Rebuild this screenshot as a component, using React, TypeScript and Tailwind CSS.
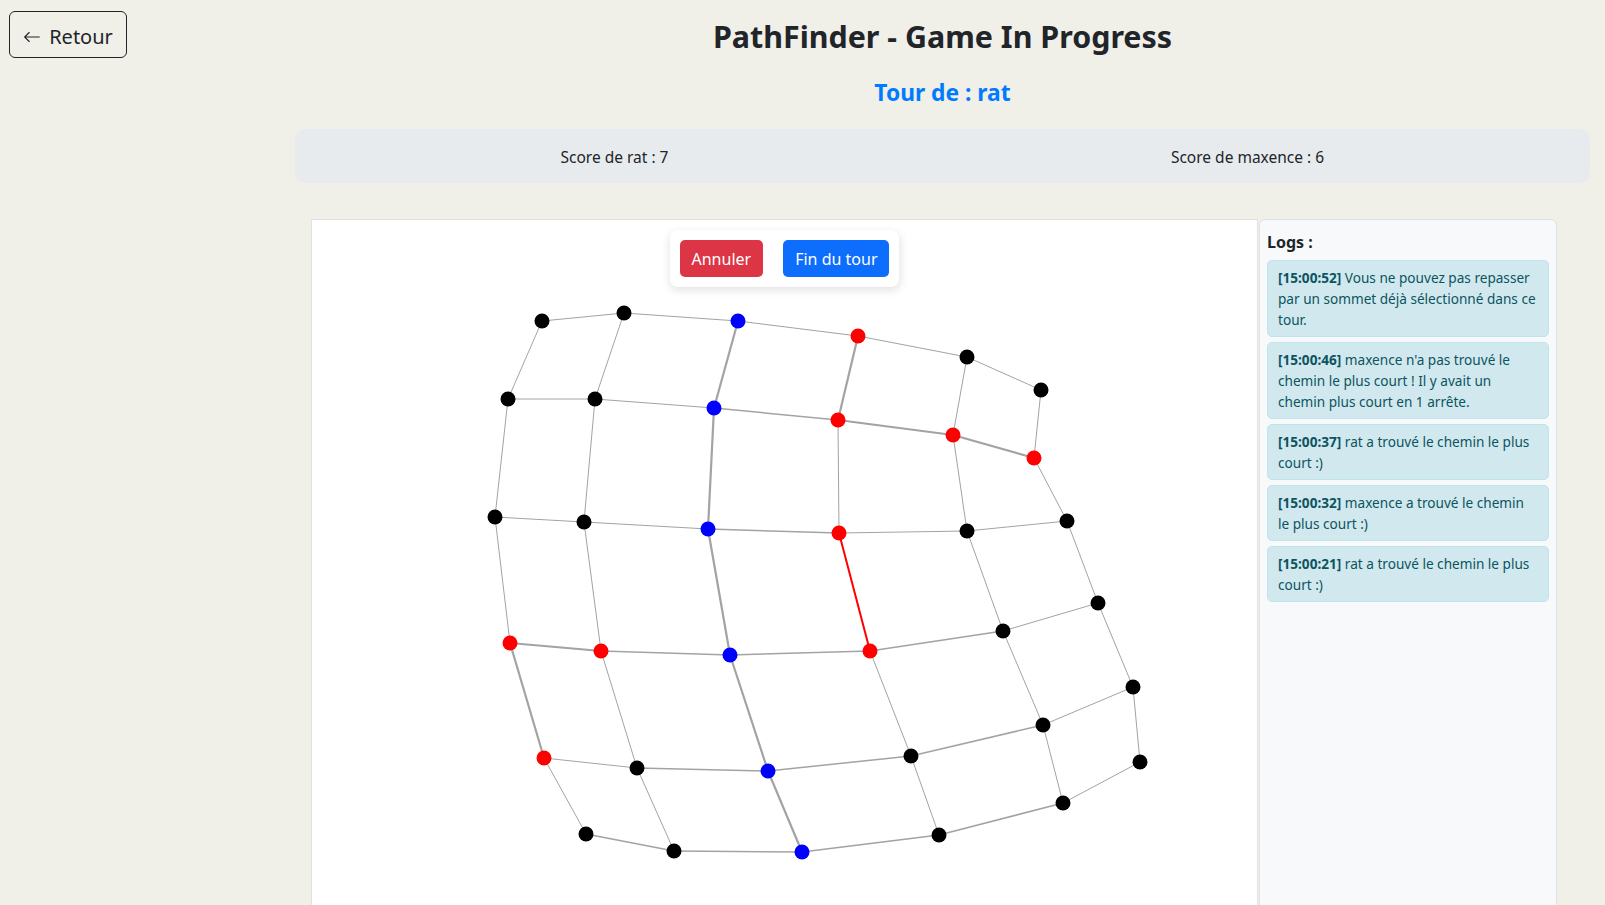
import { BsArrowLeft } from "react-icons/bs";

// graph coords are relative to the canvas box interior
const OX = 312;
const OY = 220;

const K = "#000000";
const B = "#0000ff";
const R = "#ff0000";

const grid: [number, number, string][][] = [
  [[542, 321, K], [624, 313, K], [738, 321, B], [858, 336, R], [967, 357, K], [1041, 390, K]],
  [[508, 399, K], [595, 399, K], [714, 408, B], [838, 420, R], [953, 435, R], [1034, 458, R]],
  [[495, 517, K], [584, 522, K], [708, 529, B], [839, 533, R], [967, 531, K], [1067, 521, K]],
  [[510, 643, R], [601, 651, R], [730, 655, B], [870, 651, R], [1003, 631, K], [1098, 603, K]],
  [[544, 758, R], [637, 768, K], [768, 771, B], [911, 756, K], [1043, 725, K], [1133, 687, K]],
  [[586, 834, K], [674, 851, K], [802, 852, B], [939, 835, K], [1063, 803, K], [1140, 762, K]],
];

const thick = ["v02", "v03", "v12", "h13", "h14", "v22", "h30", "v30", "v32", "v42"];
const medium = ["h12", "h22", "h31", "h33", "h41", "h42", "h43", "h50", "h51", "h52", "h53", "h32"];
const redEdges = ["v23"];

type Edge = { id: string; a: [number, number]; b: [number, number] };

function buildEdges(): Edge[] {
  const out: Edge[] = [];
  for (let r = 0; r < 6; r++) {
    for (let c = 0; c < 6; c++) {
      const p = grid[r][c];
      if (c < 5) {
        const q = grid[r][c + 1];
        out.push({ id: `h${r}${c}`, a: [p[0], p[1]], b: [q[0], q[1]] });
      }
      if (r < 5) {
        const q = grid[r + 1][c];
        out.push({ id: `v${r}${c}`, a: [p[0], p[1]], b: [q[0], q[1]] });
      }
    }
  }
  return out;
}

const logs = [
  { t: "15:00:52", msg: "Vous ne pouvez pas repasser par un sommet déjà sélectionné dans ce tour." },
  { t: "15:00:46", msg: "maxence n'a pas trouvé le chemin le plus court ! Il y avait un chemin plus court en 1 arrête." },
  { t: "15:00:37", msg: "rat a trouvé le chemin le plus court :)" },
  { t: "15:00:32", msg: "maxence a trouvé le chemin le plus court :)" },
  { t: "15:00:21", msg: "rat a trouvé le chemin le plus court :)" },
];

function Graph() {
  const edges = buildEdges();
  return (
    <svg width="945" height="700" viewBox="0 0 945 700" className="block">
      {edges.map((e) => {
        const red = redEdges.includes(e.id);
        const w = red ? 2 : thick.includes(e.id) ? 2.2 : medium.includes(e.id) ? 1.5 : 1;
        return (
          <line
            key={e.id}
            x1={e.a[0] - OX}
            y1={e.a[1] - OY}
            x2={e.b[0] - OX}
            y2={e.b[1] - OY}
            stroke={red ? "#ff0000" : "#a3a3a3"}
            strokeWidth={w}
          />
        );
      })}
      {grid.flat().map((n, i) => (
        <circle key={i} cx={n[0] - OX} cy={n[1] - OY} r={7.5} fill={n[2]} />
      ))}
    </svg>
  );
}

export default function App() {
  return (
    <div className="min-h-screen bg-[#f0efe8] font-['Noto_Sans',sans-serif] text-[#212529]">
      <div className="flex">
        <div className="w-[280px] shrink-0 pl-[9px] pt-[11px]">
          <button className="flex h-[47px] w-[118px] items-center justify-center gap-[8px] rounded-[6px] border border-[#212529] pt-[4px] text-[20px]">
            <BsArrowLeft className="h-[18px] w-[18px]" />
            <span>Retour</span>
          </button>
        </div>

        <div className="flex-1">
          <h1 className="pt-[17px] text-center text-[30.4px] font-bold leading-[40px]">PathFinder - Game In Progress</h1>
          <h2 className="mt-[21px] text-center text-[22.8px] font-bold leading-[30px] text-[#007bff]">Tour de : rat</h2>

          <div className="mx-[15px] mt-[21px] flex h-[54px] items-center rounded-[10px] bg-[#e8ebee] pl-[3px] pr-[26px] pt-[3px] text-[15.5px]">
            <div className="flex-1 text-center">Score de rat : 7</div>
            <div className="flex-1 text-center">Score de maxence : 6</div>
          </div>

          <div className="mt-[36px] flex gap-[1px] pl-[31px]">
            <div className="relative h-[702px] w-[947px] shrink-0 border border-[#dee2e6] bg-white">
              <Graph />
              <div className="absolute left-1/2 top-[10px] flex -translate-x-1/2 gap-[20px] rounded-lg bg-white p-[10px] shadow-[0_3px_10px_rgba(0,0,0,0.12)]">
                <button className="h-[37px] rounded-[5px] bg-[#dc3545] px-[12px] text-[16px] text-white">Annuler</button>
                <button className="h-[37px] rounded-[5px] bg-[#0d6efd] px-[12px] text-[16px] text-white">Fin du tour</button>
              </div>
            </div>

            <div className="h-[702px] w-[298px] shrink-0 rounded-[6px] border border-[#dee2e6] bg-[#f8f9fa] px-[7px] pt-[10px]">
              <div className="text-[16px] font-bold leading-[24px]">Logs :</div>
              <div className="mt-[6px] flex flex-col gap-[5px]">
                {logs.map((l) => (
                  <div
                    key={l.t}
                    className="rounded-[5px] border border-[#bee5eb] bg-[#d1e9ee] px-[10px] py-[6px] text-[13.6px] leading-[21px] text-[#0c5460]"
                  >
                    <b>[{l.t}]</b> {l.msg}
                  </div>
                ))}
              </div>
            </div>
          </div>
        </div>
      </div>
    </div>
  );
}
